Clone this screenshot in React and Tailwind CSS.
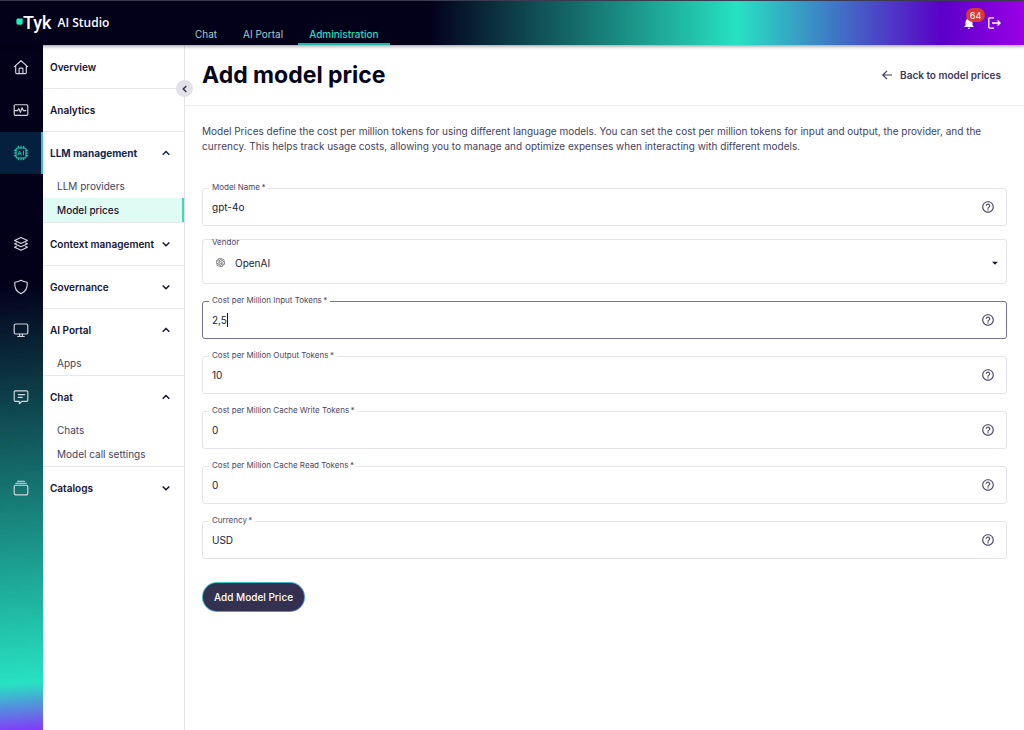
import React from "react";
import { SiOpenai } from "react-icons/si";
import { MdHelpOutline, MdNotifications, MdArrowDropDown } from "react-icons/md";

function RailIcon({ children, className = "text-[#d6d6e0]" }) {
  return (
    <svg
      viewBox="0 0 16 16"
      aria-hidden="true"
      className={"size-4 " + className}
      fill="none"
      stroke="currentColor"
      strokeWidth="1.15"
      strokeLinecap="round"
      strokeLinejoin="round"
    >
      {children}
    </svg>
  );
}

const icons = {
  home: (
    <RailIcon>
      <path d="M1.4 7.6 8 1.7l6.6 5.900M2.700 6.600v6.800a1.200 1.200 0 0 0 1.200 1.200h8.200a1.200 1.200 0 0 0 1.200-1.200V6.600M6.100 14.400V10a.9.9 0 0 1 .9-.9h2a.9.9 0 0 1 .9.9v4.400" />
    </RailIcon>
  ),
  analytics: (
    <RailIcon>
      <rect x="1.2" y="2.7" width="13.6" height="10.6" rx="1" />
      <path d="M1.5 8.6h3.1l1.2-2 1.6 3.8 1.7-4.6 1.2 2.8h2.5" />
    </RailIcon>
  ),
  llm: (
    <RailIcon className="text-[#20c9ae]">
      <rect x="3" y="3" width="10" height="10" rx="1.6" strokeWidth="1.2" />
      <path
        strokeWidth="1.2"
        d="M5.3 1.4v1.4M8 1.2v1.6M10.7 1.4v1.4M5.3 13.2v1.4M8 13.2v1.6M10.7 13.2v1.4M1.4 5.3h1.4M1.2 8h1.6M1.4 10.7h1.4M13.2 5.3h1.4M13.2 8h1.6M13.2 10.7h1.4"
      />
      <path strokeWidth=".9" d="m5 9.800 1.600-3.700 1.600 3.700M5.500 8.800h2.200M10.500 6.100v3.700" />
    </RailIcon>
  ),
  context: (
    <RailIcon>
      <path d="M8 1.500 14.400 4.500 8 7.500 1.600 4.500Z" />
      <path d="m3.400 6.900-1.800.9L8 10.800l6.400-3-1.800-.9M3.400 10.300l-1.800.900L8 14.200l6.400-3-1.800-.9" />
    </RailIcon>
  ),
  governance: (
    <RailIcon>
      <path d="M8 1.300c1.700 1.100 3.700 1.700 6.200 1.900.5 5.300-1.500 9.400-6.200 11.600C3.300 12.600 1.300 8.500 1.800 3.200 4.300 3 6.300 2.400 8 1.300Z" />
    </RailIcon>
  ),
  portal: (
    <RailIcon>
      <rect x="1.200" y="2" width="13.600" height="10" rx="1.200" />
      <path d="M6.600 12v2.400M9.400 12v2.400M4.700 14.500h6.600" />
    </RailIcon>
  ),
  chat: (
    <RailIcon>
      <path d="M2.300 1.800h11.400a1.100 1.100 0 0 1 1.100 1.100v8.300a1.100 1.100 0 0 1-1.100 1.100H9L6.300 14.700v-2.400h-4a1.100 1.100 0 0 1-1.100-1.100V2.900a1.100 1.100 0 0 1 1.100-1.100ZM5.300 5.600h6.400M5.300 8.400h3.900" />
    </RailIcon>
  ),
  catalogs: (
    <RailIcon>
      <rect x="1.200" y="5.200" width="13.600" height="9.600" rx="1.400" />
      <path d="M2.700 3.200h10.600M4.500 1.200h7" />
    </RailIcon>
  ),
};

function Chevron({ direction }) {
  const paths = {
    up: "M1.700 6.700 5 3.500l3.300 3.200",
    down: "M1.700 3.500 5 6.700l3.300-3.200",
    left: "M6.300 2 3.300 5l3 3",
  };
  return (
    <svg viewBox="0 0 10 10" aria-hidden="true" className="size-2.5" fill="none" stroke="currentColor" strokeWidth="1.500">
      <path d={paths[direction]} />
    </svg>
  );
}

const groups = [
  { label: "Overview", icon: "home" },
  { label: "Analytics", icon: "analytics" },
  { label: "LLM management", icon: "llm", open: true, active: true, items: ["LLM providers", "Model prices"] },
  { label: "Context management", icon: "context", open: false, items: [] },
  { label: "Governance", icon: "governance", open: false, items: [] },
  { label: "AI Portal", icon: "portal", open: true, items: ["Apps"] },
  { label: "Chat", icon: "chat", open: true, items: ["Chats", "Model call settings"] },
  { label: "Catalogs", icon: "catalogs", open: false, items: [], last: true },
];

function NavGroup({ group }) {
  const { label, icon, open, active, items, last } = group;
  const rowClass =
    "flex h-[42px] w-full items-center justify-between pl-[7px] pr-[13px] text-left text-[10px] whitespace-nowrap " +
    (active ? "font-bold text-[#0b2a52]" : "font-semibold text-[#15132f]");
  return (
    <li className="flex">
      <div
        className={
          "flex h-[42px] w-[43px] shrink-0 items-center justify-center " +
          (active ? "border-r-2 border-[#3fb9c4] bg-[#05203f]" : "pr-px")
        }
      >
        {icons[icon]}
      </div>
      <div className={"min-w-0 flex-1 " + (last ? "" : "border-b border-[#e6e6eb]")}>
        {items ? (
          <button type="button" aria-expanded={open} className={rowClass}>
            {label}
            <Chevron direction={open ? "up" : "down"} />
          </button>
        ) : (
          <a href="#" className={rowClass}>
            {label}
          </a>
        )}
        {open && (
          <ul>
            {items.map((item) => (
              <li key={item}>
                <a
                  href="#"
                  className={
                    "flex h-6 items-center pl-3.5 text-[10px] whitespace-nowrap " +
                    (item === "Model prices"
                      ? "border-r-2 border-[#3fd9bf] bg-[#dffbf4] font-medium text-[#15132f]"
                      : "text-[#454160]")
                  }
                >
                  {item}
                </a>
              </li>
            ))}
          </ul>
        )}
      </div>
    </li>
  );
}

function Field({ id, label, value, focused }) {
  return (
    <div
      className={
        "relative flex h-[38px] items-center rounded-[3px] border pl-[9px] pr-[11px] " +
        (focused ? "border-[#75718f]" : "border-[#e4e4ea]")
      }
    >
      <label htmlFor={id} className="absolute -top-2 left-1.5 bg-white px-[3px] text-[8px] leading-3 text-[#4a4665]">
        {label}&thinsp;*
      </label>
      <input
        id={id}
        type="text"
        required
        defaultValue={value}
        className={
          "bg-transparent text-[10px] text-[#1d1a38] outline-none " +
          (focused ? "[field-sizing:content]" : "min-w-0 flex-1")
        }
      />
      {focused && <span aria-hidden="true" className="h-3.5 w-px bg-[#15132f]" />}
      <button type="button" aria-label={"Help: " + label} className="ml-auto text-[#4a4665]">
        <MdHelpOutline className="size-[14px]" />
      </button>
    </div>
  );
}

function Header() {
  const tab = "flex h-full items-center border-b-2 px-[11px] pt-0.5 ";
  return (
    <header className="relative z-10 flex h-[45px] shrink-0 border-t border-[#3a3a50] bg-[linear-gradient(90deg,#03001a_0%,#03001a_42%,#27e2c2_72%,#5a00c8_92%,#9a00e6_100%)] shadow-[0_1px_4px_rgba(0,0,0,0.45)]">
      <div className="flex w-[184px] shrink-0 items-center pl-4 text-white">
        <svg viewBox="0 0 7 7" aria-hidden="true" className="mb-1 size-[7px]">
          <path d="M2 .5h4.700v4.300c0 1.200-.6 1.900-1.800 1.900H2.300C1 6.700.4 6 .4 4.800V2.200C.4 1 .9.500 2 .5Z" fill="#20edbd" />
        </svg>
        <span className="font-['Roboto',sans-serif] text-[18px] leading-6 font-medium">Tyk</span>
        <span className="ml-1.5 font-['Open_Sans',sans-serif] text-[12px] font-semibold">AI Studio</span>
      </div>
      <nav aria-label="Sections" className="flex h-[22px] gap-1 self-end text-[10px]">
        <a href="#" className={tab + "border-transparent text-[#a3cdd0]"}>Chat</a>
        <a href="#" className={tab + "border-transparent text-[#a3cdd0]"}>AI Portal</a>
        <a href="#" className={tab + "border-[#20b9a5] font-medium text-[#24dcc0]"}>Administration</a>
      </nav>
      <div className="ml-auto flex items-center gap-3 pr-[23px] text-white">
        <button type="button" aria-label="Notifications" className="relative">
          <MdNotifications className="size-3.5" />
          <span className="absolute -top-2 left-1 flex h-3.5 w-[19px] items-center justify-center rounded-full bg-[#d53a35] text-[9px] leading-none">
            64
          </span>
        </button>
        <button type="button" aria-label="Log out">
          <svg viewBox="0 0 13 12" className="h-3 w-[13px]" fill="none" stroke="currentColor" strokeWidth="1.300">
            <path d="M6 .8H1.900A1.100 1.100 0 0 0 .8 1.900v8.200a1.100 1.100 0 0 0 1.100 1.100H6M4 6h8M9.600 3.500 12.100 6 9.600 8.500" />
          </svg>
        </button>
      </div>
    </header>
  );
}

export default function App() {
  return (
    <div className="flex min-h-screen flex-col bg-white font-['Inter',sans-serif] text-[#15132f]">
      <Header />
      <div className="flex flex-1">
        <aside className="relative w-[185px] shrink-0 border-r border-[#e2e2e8] bg-[linear-gradient(176deg,#03001a_0%,#03001a_35%,#27e2c2_93%,#8438fa_100%)] bg-[length:43px_100%] bg-no-repeat pt-px">
          <nav aria-label="Main">
            <ul>
              {groups.map((group) => (
                <NavGroup key={group.label} group={group} />
              ))}
            </ul>
          </nav>
          <button
            type="button"
            aria-label="Collapse menu"
            className="absolute top-[35px] -right-[9px] flex size-[17px] items-center justify-center rounded-full bg-[#e2e2e8] text-[#3a3654]"
          >
            <Chevron direction="left" />
          </button>
        </aside>
        <main className="min-w-0 flex-1">
          <div className="flex h-[61px] items-center justify-between border-b border-[#ececf0] pr-[23px] pl-[17px]">
            <h1 className="text-[23px] font-bold text-[#03031c]">Add model price</h1>
            <a href="#" className="flex items-center gap-2 text-[10px] font-semibold text-[#3d3959]">
              <svg viewBox="0 0 10 10" aria-hidden="true" className="size-2.5" fill="none" stroke="currentColor" strokeWidth="1.200">
                <path d="M10 5H1M5 .8.8 5 5 9.200" />
              </svg>
              Back to model prices
            </a>
          </div>
          <div className="px-[17px] pt-[18px] pb-8">
            <p className="text-[10px] leading-[15px] text-[#454160]">
              Model Prices define the cost per million tokens for using different language models. You can set the cost
              per million tokens for input and output, the provider, and the currency. This helps track usage costs,
              allowing you to manage and optimize expenses when interacting with different models.
            </p>
            <form className="mt-[34px]">
              <Field id="model-name" label="Model Name" value="gpt-4o" />
              <div className="relative mt-[13px] h-[45px]">
                <label htmlFor="vendor" className="absolute top-[-3px] left-2.5 text-[8px] leading-3 text-[#4a4665]">
                  Vendor
                </label>
                <SiOpenai aria-hidden="true" className="pointer-events-none absolute top-[19px] left-3.5 size-[9px] text-[#4b4b50]" />
                <select
                  id="vendor"
                  defaultValue="OpenAI"
                  className="h-full w-full appearance-none rounded-[3px] border border-[#e4e4ea] bg-transparent pt-1 pl-8 text-[10px] text-[#1d1a38] outline-none"
                >
                  <option>OpenAI</option>
                </select>
                <MdArrowDropDown aria-hidden="true" className="pointer-events-none absolute top-[17px] right-[5px] size-3.5" />
              </div>
              <div className="mt-[17px] flex flex-col gap-[17px]">
                <Field id="input-cost" label="Cost per Million Input Tokens" value="2,5" focused />
                <Field id="output-cost" label="Cost per Million Output Tokens" value="10" />
                <Field id="cache-write-cost" label="Cost per Million Cache Write Tokens" value="0" />
                <Field id="cache-read-cost" label="Cost per Million Cache Read Tokens" value="0" />
                <Field id="currency" label="Currency" value="USD" />
              </div>
              <div className="mt-[23px] inline-flex rounded-full bg-linear-to-br from-[#22d3bb] to-[#5a78e0] p-px">
                <button type="button" className="h-7 rounded-full bg-[#343050] px-[11px] text-[10px] font-medium text-white">
                  Add Model Price
                </button>
              </div>
            </form>
          </div>
        </main>
      </div>
    </div>
  );
}
